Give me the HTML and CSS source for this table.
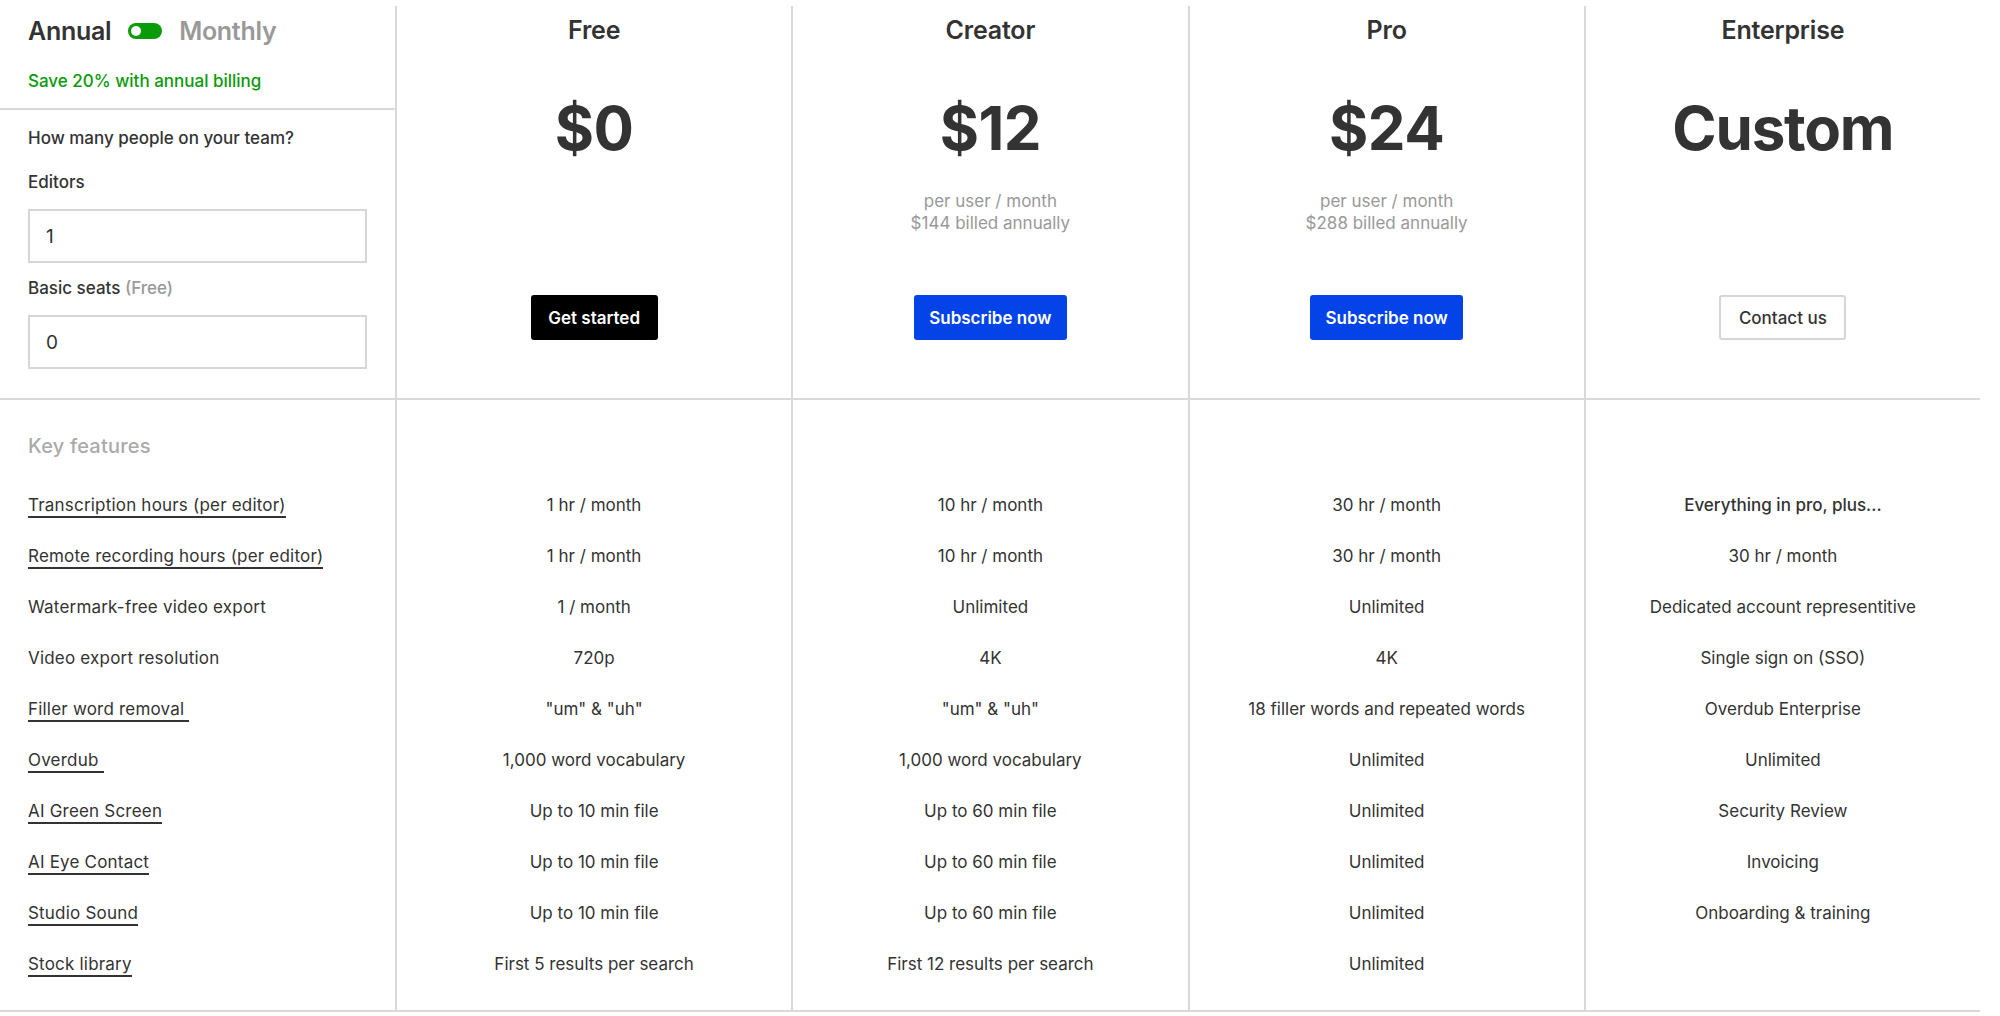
FILE: index.html
```html
<!DOCTYPE html>
<html lang="en">
<head>
<meta charset="utf-8">
<title>Pricing</title>
<link rel="stylesheet" href="styles.css">
</head>
<body>
<main class="pricing">
  <section class="head-grid">
    <div class="side">
      <div class="billing">
        <div class="toggle-row">
          <span class="period active">Annual</span>
          <span class="switch"><span class="knob"></span></span>
          <span class="period muted">Monthly</span>
        </div>
        <p class="save">Save 20% with annual billing</p>
      </div>
      <div class="team">
        <p class="q">How many people on your team?</p>
        <label class="lbl" for="editors">Editors</label>
        <input class="num" id="editors" type="text" value="1">
        <label class="lbl" for="basic">Basic seats <span class="muted-s">(Free)</span></label>
        <input class="num" id="basic" type="text" value="0">
      </div>
    </div>
    <div class="plan">
      <h2 class="plan-name">Free</h2>
      <div class="price">$0</div>
      <div class="per"></div>
      <a class="btn btn-black">Get started</a>
    </div>
    <div class="plan">
      <h2 class="plan-name">Creator</h2>
      <div class="price">$12</div>
      <div class="per">per user / month<br>$144 billed annually</div>
      <a class="btn btn-blue">Subscribe now</a>
    </div>
    <div class="plan">
      <h2 class="plan-name">Pro</h2>
      <div class="price">$24</div>
      <div class="per">per user / month<br>$288 billed annually</div>
      <a class="btn btn-blue">Subscribe now</a>
    </div>
    <div class="plan">
      <h2 class="plan-name">Enterprise</h2>
      <div class="price custom">Custom</div>
      <div class="per"></div>
      <a class="btn btn-outline">Contact us</a>
    </div>
  </section>

  <section class="feat-grid">
    <div class="fcol labels">
      <div class="fhead">Key features</div>
      <div class="frow"><span class="tip">Transcription hours (per editor)</span></div>
      <div class="frow"><span class="tip">Remote recording hours (per editor)</span></div>
      <div class="frow">Watermark-free video export</div>
      <div class="frow">Video export resolution</div>
      <div class="frow"><span class="tip">Filler word removal&nbsp;</span></div>
      <div class="frow"><span class="tip">Overdub&nbsp;</span></div>
      <div class="frow"><span class="tip">AI Green Screen</span></div>
      <div class="frow"><span class="tip">AI Eye Contact</span></div>
      <div class="frow"><span class="tip">Studio Sound</span></div>
      <div class="frow"><span class="tip">Stock library</span></div>
    </div>
    <div class="fcol vals">
      <div class="fhead"></div>
      <div class="frow">1 hr / month</div>
      <div class="frow">1 hr / month</div>
      <div class="frow">1 / month</div>
      <div class="frow">720p</div>
      <div class="frow">"um" &amp; "uh"</div>
      <div class="frow">1,000 word vocabulary</div>
      <div class="frow">Up to 10 min file</div>
      <div class="frow">Up to 10 min file</div>
      <div class="frow">Up to 10 min file</div>
      <div class="frow">First 5 results per search</div>
    </div>
    <div class="fcol vals">
      <div class="fhead"></div>
      <div class="frow">10 hr / month</div>
      <div class="frow">10 hr / month</div>
      <div class="frow">Unlimited</div>
      <div class="frow">4K</div>
      <div class="frow">"um" &amp; "uh"</div>
      <div class="frow">1,000 word vocabulary</div>
      <div class="frow">Up to 60 min file</div>
      <div class="frow">Up to 60 min file</div>
      <div class="frow">Up to 60 min file</div>
      <div class="frow">First 12 results per search</div>
    </div>
    <div class="fcol vals">
      <div class="fhead"></div>
      <div class="frow">30 hr / month</div>
      <div class="frow">30 hr / month</div>
      <div class="frow">Unlimited</div>
      <div class="frow">4K</div>
      <div class="frow">18 filler words and repeated words</div>
      <div class="frow">Unlimited</div>
      <div class="frow">Unlimited</div>
      <div class="frow">Unlimited</div>
      <div class="frow">Unlimited</div>
      <div class="frow">Unlimited</div>
    </div>
    <div class="fcol vals">
      <div class="fhead"></div>
      <div class="frow strong">Everything in pro, plus...</div>
      <div class="frow">30 hr / month</div>
      <div class="frow">Dedicated account representitive</div>
      <div class="frow">Single sign on (SSO)</div>
      <div class="frow">Overdub Enterprise</div>
      <div class="frow">Unlimited</div>
      <div class="frow">Security Review</div>
      <div class="frow">Invoicing</div>
      <div class="frow">Onboarding &amp; training</div>
      <div class="frow"></div>
    </div>
  </section>
</main>
</body>
</html>
```

FILE: styles.css
```css
* { box-sizing: border-box; }

html, body {
  margin: 0;
  padding: 0;
  background: #fff;
}

body {
  font-family: Inter, "Noto Sans", "Liberation Sans", sans-serif;
  color: #333;
  font-size: 17px;
}

.pricing {
  width: 1980px;
  margin-top: 6px;
}

.head-grid,
.feat-grid {
  display: grid;
  grid-template-columns: 395px repeat(4, 1fr);
}

.head-grid {
  height: 394px;
  border-bottom: 2px solid #d9d9d9;
}

/* left side */
.side {
  display: flex;
  flex-direction: column;
}

.billing {
  height: 104px;
  padding: 10px 28px 0;
  border-bottom: 2px solid #d9d9d9;
}

.toggle-row {
  display: flex;
  align-items: center;
  height: 30px;
  gap: 17px;
}

.period {
  font-size: 25px;
  font-weight: 600;
  letter-spacing: -0.3px;
}

.period.active { color: #333; }
.period.muted { color: #999; }

.switch {
  width: 34px;
  height: 16px;
  border-radius: 8px;
  background: #0a9b0a;
  display: flex;
  align-items: center;
  padding-left: 3px;
}

.knob {
  width: 10px;
  height: 10px;
  border-radius: 50%;
  background: #fff;
}

.save {
  margin: 23px 0 0;
  color: #0a9b0a;
  font-size: 17px;
  font-weight: 500;
  line-height: 24px;
}

.team {
  padding: 16px 28px 0;
  display: flex;
  flex-direction: column;
}

.q, .lbl {
  margin: 0;
  font-size: 17px;
  line-height: 24px;
  font-weight: 500;
  color: #333;
}

.lbl { margin-top: 20px; }
.lbl + .num { margin-top: 15px; }
.num + .lbl { margin-top: 13px; }

.muted-s { color: #999; }

.num {
  width: 339px;
  height: 54px;
  border: 2px solid #d6d6d6;
  border-radius: 0;
  padding: 0 0 0 16px;
  font-family: inherit;
  font-size: 19px;
  color: #333;
  background: #fff;
  outline: none;
}

/* plans */
.plan {
  border-left: 2px solid #d9d9d9;
  display: flex;
  flex-direction: column;
  align-items: center;
  padding: 9px 0 58px;
}

.plan-name {
  margin: 0;
  font-size: 25px;
  line-height: 30px;
  font-weight: 600;
  color: #333;
  letter-spacing: -0.2px;
}

.price {
  margin-top: 47px;
  font-size: 60px;
  line-height: 72px;
  font-weight: 700;
  color: #333;
  letter-spacing: -0.5px;
}

.price.custom {
  letter-spacing: -1.2px;
}

.per {
  margin-top: 26px;
  font-size: 17px;
  line-height: 22px;
  color: #999;
  text-align: center;
}

.btn {
  margin-top: auto;
  height: 45px;
  display: inline-flex;
  align-items: center;
  justify-content: center;
  padding: 0 10px;
  border-radius: 3px;
  font-size: 17px;
  font-weight: 600;
  white-space: nowrap;
  cursor: pointer;
}

.btn-black {
  background: #000;
  color: #fff;
  width: 127px;
}

.btn-blue {
  background: #0443e8;
  color: #fff;
  width: 153px;
}

.btn-outline {
  background: #fff;
  color: #333;
  border: 2px solid #d6d6d6;
  font-weight: 500;
  width: 127px;
}

/* features */
.feat-grid {
  border-bottom: 2px solid #d9d9d9;
}

.fcol {
  padding-bottom: 20px;
}

.fcol.vals {
  border-left: 2px solid #d9d9d9;
  text-align: center;
}

.labels {
  padding-left: 28px;
}

.labels .frow {
  letter-spacing: 0.2px;
}

.fhead {
  height: 80px;
  padding-top: 32px;
  font-size: 20px;
  line-height: 28px;
  font-weight: 500;
  color: #aaa;
  letter-spacing: 0.2px;
}

.frow {
  height: 51px;
  line-height: 51px;
  font-size: 17px;
  color: #333;
  white-space: nowrap;
}

.frow.strong {
  font-weight: 500;
}

.tip {
  border-bottom: 2px solid #333;
  line-height: 21px;
  display: inline-block;
}
```
